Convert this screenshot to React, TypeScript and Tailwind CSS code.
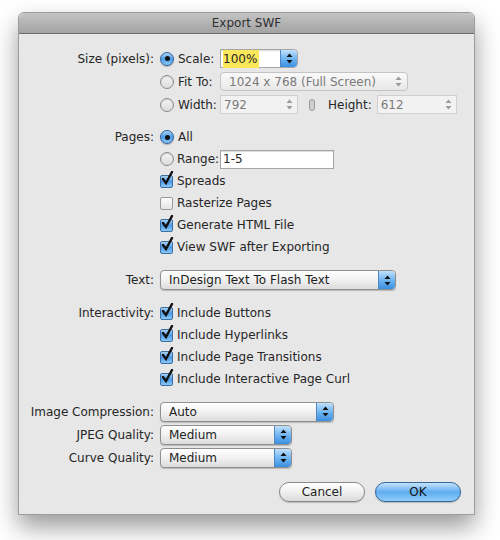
import React from 'react';

const font = { fontFamily: '"DejaVu Sans", "Liberation Sans", sans-serif' };

const Arrows = ({ dim }: { dim?: boolean }) => (
    <svg width="7" height="11" viewBox="0 0 7 11">
        <path d="M3.5 0.5 L6.5 4 L0.5 4 Z" fill={dim ? '#9a9a9a' : '#111'} />
        <path d="M3.5 10.5 L6.5 7 L0.5 7 Z" fill={dim ? '#9a9a9a' : '#111'} />
    </svg>
);

const BlueCap = () => (
    <div className="w-[17px] h-full flex items-center justify-center rounded-r-[4px] bg-gradient-to-b from-[#bfe0fb] via-[#6fb6f2] to-[#3a8fe0] border-l border-[#4f86c2]">
        <Arrows />
    </div>
);

const Radio = ({ on }: { on?: boolean }) =>
    on ? (
        <div className="w-[14px] h-[14px] shrink-0 rounded-full border border-[#2d5f9a] bg-gradient-to-b from-[#a9d4f7] via-[#4c9be6] to-[#8cc8f8] flex items-center justify-center shadow-[0_1px_1px_rgba(0,0,0,0.25)]">
            <div className="w-[5px] h-[5px] rounded-full bg-[#111]" />
        </div>
    ) : (
        <div className="w-[14px] h-[14px] shrink-0 rounded-full border border-[#8a8a8a] bg-gradient-to-b from-[#f4f4f4] to-[#dcdcdc] shadow-[inset_0_1px_1px_rgba(0,0,0,0.15)]" />
    );

const Check = ({ on }: { on?: boolean }) => (
    <div className="relative w-[13px] h-[13px] shrink-0">
        <div
            className={
                on
                    ? 'w-[13px] h-[13px] rounded-[2px] border border-[#3a6ea5] bg-gradient-to-b from-[#a9d4f7] via-[#4c9be6] to-[#8cc8f8]'
                    : 'w-[13px] h-[13px] rounded-[2px] border border-[#9a9a9a] bg-gradient-to-b from-[#fdfdfd] to-[#e4e4e4]'
            }
        />
        {on && (
            <svg className="absolute left-[1px] top-[-4px]" width="13" height="15" viewBox="0 0 13 15">
                <path d="M2 8 L5 12 L11 1" stroke="#111" strokeWidth="2.4" fill="none" strokeLinecap="round" />
            </svg>
        )}
    </div>
);

const Popup = ({ text, w }: { text: string; w: string }) => (
    <div className={`${w} h-[20px] flex items-stretch rounded-[4px] border border-[#8f8f8f] bg-gradient-to-b from-[#ffffff] via-[#f1f1f1] to-[#dcdcdc] shadow-[0_1px_1px_rgba(0,0,0,0.2)]`}>
        <div className="flex-1 pl-[8px] flex items-center text-[#1e1e1e]">{text}</div>
        <BlueCap />
    </div>
);

const Row = ({ label, children, h = 'h-[22px]' }: { label?: string; children: React.ReactNode; h?: string }) => (
    <div className={`flex items-center ${h}`}>
        <div className="w-[136px] text-right pr-[1px] shrink-0 whitespace-nowrap">{label}</div>
        <div className="flex items-center pl-[5px] whitespace-nowrap">{children}</div>
    </div>
);

const CheckRow = ({ on, text, label }: { on?: boolean; text: string; label?: string }) => (
    <Row label={label}>
        <Check on={on} />
        <span className="ml-[4px]">{text}</span>
    </Row>
);

export default function App() {
    return (
        <div className="w-[500px] h-[540px] bg-white relative" style={font}>
            <div className="absolute left-[18px] top-[12px] w-[457px] h-[503px] flex flex-col rounded-t-[6px] border border-[#9c9c9c] bg-[#e7e7e7] shadow-[0_12px_24px_rgba(0,0,0,0.4)] text-[12px] text-[#262626]">
                {/* title bar */}
                <div className="h-[21px] shrink-0 flex items-center justify-center rounded-t-[6px] bg-gradient-to-b from-[#c4c4c4] to-[#a3a3a3] border-b border-[#6c6c6c] text-[#303030]">
                    Export SWF
                </div>

                <div className="flex flex-col pt-[13px]">
                    <Row label="Size (pixels):" h="h-[23px]">
                        <div className="w-[60px] flex items-center">
                            <Radio on />
                            <span className="ml-[4px]">Scale:</span>
                        </div>
                        <div className="w-[78px] h-[19px] flex items-stretch bg-white border border-[#a6a6a6] rounded-r-[4px] shadow-[inset_0_1px_1px_rgba(0,0,0,0.15)]">
                            <div className="flex-1 flex items-center pl-[2px]">
                                <span className="bg-[#fbe75a] pr-[2px]">100%</span>
                            </div>
                            <BlueCap />
                        </div>
                    </Row>
                    <Row h="h-[23px]">
                        <div className="w-[60px] flex items-center">
                            <Radio />
                            <span className="ml-[4px]">Fit To:</span>
                        </div>
                        <div className="w-[188px] h-[19px] flex items-center rounded-[4px] border border-[#c4c4c4] bg-gradient-to-b from-[#fafafa] to-[#e8e8e8] text-[#7a7a7a]">
                            <div className="flex-1 pl-[8px]">1024 x 768 (Full Screen)</div>
                            <div className="w-[17px] flex justify-center">
                                <Arrows dim />
                            </div>
                        </div>
                    </Row>
                    <Row h="h-[23px]">
                        <div className="w-[60px] flex items-center">
                            <Radio />
                            <span className="ml-[4px]">Width:</span>
                        </div>
                        <div className="w-[78px] h-[19px] flex items-center bg-[#f2f2f2] border border-[#cfcfcf] text-[#7a7a7a]">
                            <div className="flex-1 pl-[3px]">792</div>
                            <div className="w-[15px] flex justify-center">
                                <Arrows dim />
                            </div>
                        </div>
                        <div className="w-[28px] flex justify-center">
                            <div className="w-[6px] h-[12px] rounded-[3px] border border-[#9a9a9a] bg-[#d0d0d0]" />
                        </div>
                        <span className="ml-[2px]">Height:</span>
                        <div className="ml-[5px] w-[80px] h-[19px] flex items-center bg-[#f2f2f2] border border-[#cfcfcf] text-[#7a7a7a]">
                            <div className="flex-1 pl-[3px]">612</div>
                            <div className="w-[15px] flex justify-center">
                                <Arrows dim />
                            </div>
                        </div>
                    </Row>

                    <div className="h-[10px]" />
                    <Row label="Pages:">
                        <Radio on />
                        <span className="ml-[4px]">All</span>
                    </Row>
                    <Row>
                        <Radio />
                        <span className="ml-[3px]">Range:</span>
                        <div className="ml-[1px] w-[114px] h-[19px] flex items-center pl-[2px] bg-white border border-[#a6a6a6] shadow-[inset_0_1px_1px_rgba(0,0,0,0.15)]">
                            1-5
                        </div>
                    </Row>
                    <CheckRow on text="Spreads" />
                    <CheckRow text="Rasterize Pages" />
                    <CheckRow on text="Generate HTML File" />
                    <CheckRow on text="View SWF after Exporting" />

                    <div className="h-[11px]" />
                    <Row label="Text:">
                        <Popup text="InDesign Text To Flash Text" w="w-[236px]" />
                    </Row>

                    <div className="h-[11px]" />
                    <CheckRow on label="Interactivity:" text="Include Buttons" />
                    <CheckRow on text="Include Hyperlinks" />
                    <CheckRow on text="Include Page Transitions" />
                    <CheckRow on text="Include Interactive Page Curl" />

                    <div className="h-[10px]" />
                    <Row label="Image Compression:" h="h-[23px]">
                        <Popup text="Auto" w="w-[174px]" />
                    </Row>
                    <Row label="JPEG Quality:" h="h-[23px]">
                        <Popup text="Medium" w="w-[132px]" />
                    </Row>
                    <Row label="Curve Quality:" h="h-[23px]">
                        <Popup text="Medium" w="w-[132px]" />
                    </Row>

                    <div className="flex justify-end gap-[10px] pr-[13px] mt-[13px]">
                        <button className="w-[86px] h-[20px] rounded-full border border-[#8a8a8a] bg-gradient-to-b from-[#ffffff] via-[#f0f0f0] to-[#dadada] text-[#222] shadow-[0_1px_1px_rgba(0,0,0,0.2)]">
                            Cancel
                        </button>
                        <button className="w-[86px] h-[20px] rounded-full border border-[#35679d] bg-gradient-to-b from-[#c4e3fb] via-[#5fadf0] to-[#8fcdfb] text-[#111] shadow-[0_1px_1px_rgba(0,0,0,0.2)]">
                            OK
                        </button>
                    </div>
                </div>
            </div>
        </div>
    );
}
